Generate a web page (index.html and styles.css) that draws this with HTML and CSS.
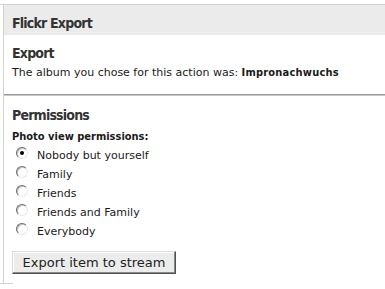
FILE: index.html
```html
<!DOCTYPE html>
<html>
<head>
<meta charset="utf-8">
<link rel="stylesheet" href="styles.css">
</head>
<body>
<div class="frame">
  <div class="topline"></div>
  <div class="panel">
    <div class="titlebar">Flickr Export</div>
    <div class="section">
      <h3 class="heading">Export</h3>
      <p class="info">The album you chose for this action was: <b>Impronachwuchs</b></p>
    </div>
    <div class="divider"></div>
    <div class="section">
      <h3 class="heading perm">Permissions</h3>
      <div class="label">Photo view permissions:</div>
      <ul class="options">
        <li><label><input type="radio" name="perm" checked><span>Nobody but yourself</span></label></li>
        <li><label><input type="radio" name="perm"><span>Family</span></label></li>
        <li><label><input type="radio" name="perm"><span>Friends</span></label></li>
        <li><label><input type="radio" name="perm"><span>Friends and Family</span></label></li>
        <li><label><input type="radio" name="perm"><span>Everybody</span></label></li>
      </ul>
      <button class="btn" type="button">Export item to stream</button>
    </div>
  </div>
  <div class="foot"></div>
</div>
</body>
</html>
```

FILE: styles.css
```css
html, body {
  margin: 0;
  padding: 0;
  background: #fff;
}
body {
  font-family: "DejaVu Sans", Verdana, sans-serif;
  font-size: 11px;
  color: #1a1a1a;
}
.frame {
  padding-top: 4px;
}
.topline {
  border-top: 1px solid #d2d2d2;
}
.panel {
  margin-left: 3px;
  border-left: 1px solid #d2d2d2;
  height: 278px;
  box-sizing: border-box;
}
.titlebar {
  background: #ebebeb;
  height: 30px;
  box-sizing: border-box;
  padding: 10px 0 0 8px;
  line-height: 17px;
  font-family: "DejaVu Sans Condensed", "DejaVu Sans", sans-serif;
  font-weight: bold;
  font-size: 14px;
  letter-spacing: -0.8px;
  color: #333;
}
.section {
  padding: 0 0 0 8px;
}
.heading {
  margin: 0;
  padding-top: 10px;
  font-family: "DejaVu Sans Condensed", "DejaVu Sans", sans-serif;
  font-weight: bold;
  font-size: 14px;
  letter-spacing: -0.8px;
  color: #333;
  line-height: 17px;
}
.heading.perm {
  padding-top: 11px;
}
.info {
  margin: 4px 0 0 0;
  line-height: 14px;
  font-size: 11px;
}
.info b {
  font-family: "DejaVu Sans Condensed", "DejaVu Sans", sans-serif;
  font-weight: bold;
  letter-spacing: 0.2px;
}
.divider {
  margin-top: 14px;
  height: 0;
  border-top: 1px solid #9a9a9a;
  border-bottom: 1px solid #c8c8c8;
}
.label {
  margin-top: 6px;
  font-family: "DejaVu Sans Condensed", "DejaVu Sans", sans-serif;
  font-weight: bold;
  font-size: 11px;
  line-height: 14px;
}
.options {
  list-style: none;
  margin: 2px 0 0 0;
  padding: 0 0 0 4px;
}
.options li {
  height: 19px;
}
.options label {
  display: flex;
  align-items: flex-start;
  gap: 9px;
  font-size: 11px;
  line-height: 14px;
  padding-top: 2.5px;
}
.options input {
  -webkit-appearance: none;
  appearance: none;
  width: 12px;
  height: 12px;
  margin: -2px 0 0 0;
  border-radius: 50%;
  border: 1px solid;
  border-color: #6a6a6a #e8e8e8 #e8e8e8 #6a6a6a;
  background: #fff;
  box-shadow: inset 1px 1px 0 #c4c4c4;
  box-sizing: border-box;
  position: relative;
  flex: none;
}
.options input:checked::after {
  content: "";
  position: absolute;
  left: 3px;
  top: 3px;
  width: 4px;
  height: 4px;
  border-radius: 50%;
  background: #000;
}
.btn {
  margin-top: 10px;
  width: 164px;
  height: 23px;
  box-sizing: border-box;
  font-family: "DejaVu Sans", sans-serif;
  font-size: 13px;
  line-height: 15px;
  color: #222;
  background: #ececec;
  border: 1px solid;
  border-color: #dcdcdc #505050 #505050 #dcdcdc;
  box-shadow: inset -1px -1px 0 #8a8a8a, inset 1px 1px 0 #fff;
  padding: 2px 0;
  text-align: center;
}
.foot {
  width: 13px;
  border-top: 1px solid #d2d2d2;
}
```
